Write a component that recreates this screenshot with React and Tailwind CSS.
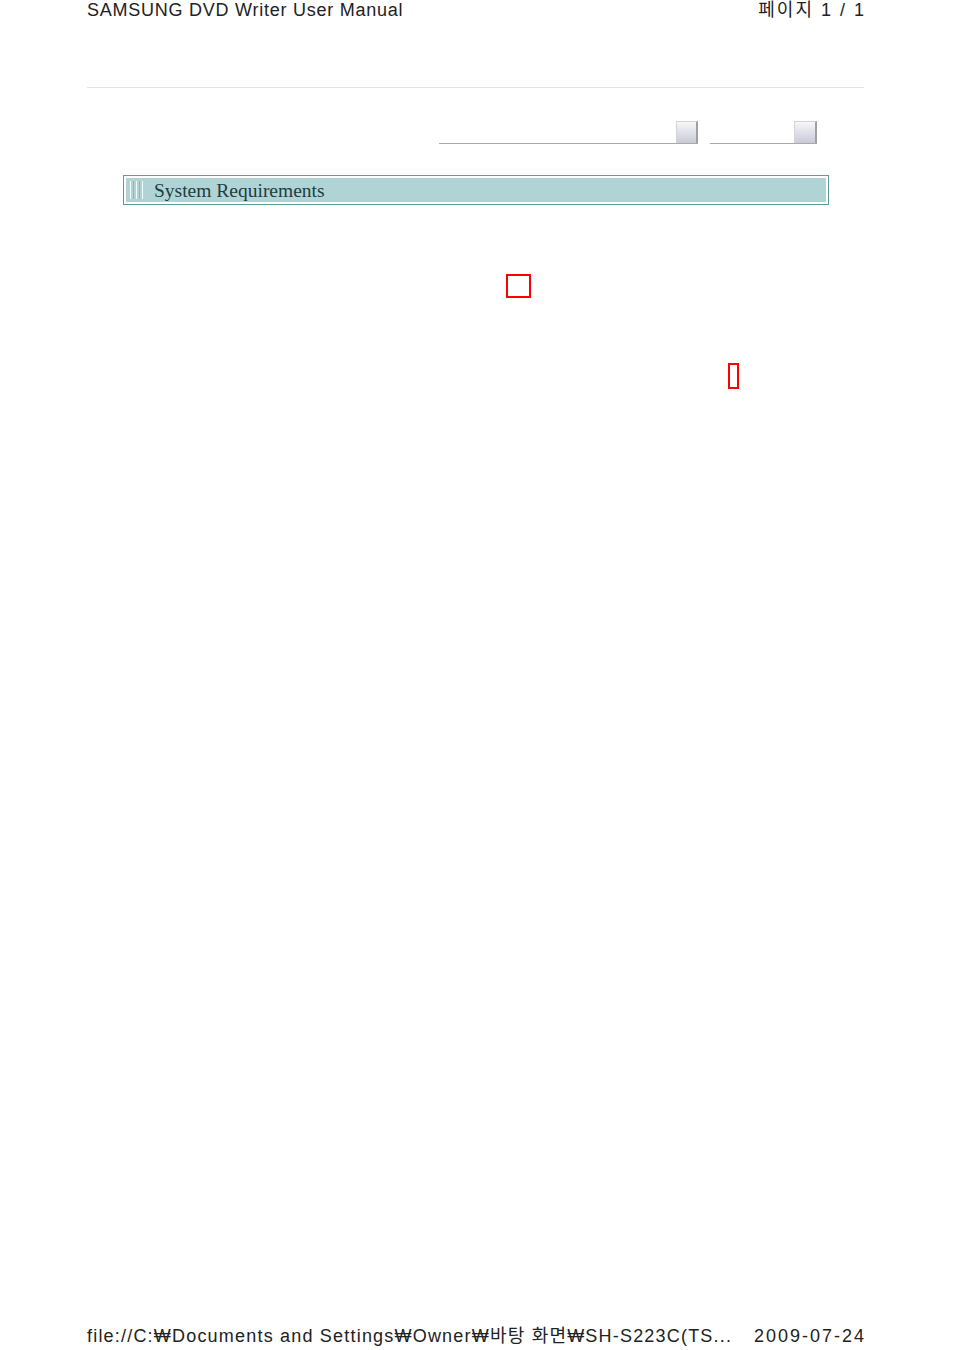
export default function App() {
  const font = { fontFamily: '"Liberation Sans", "Noto Sans CJK KR", sans-serif' };
  return (
    <div className="w-[954px] h-[1350px] bg-white flex flex-col text-black" style={font}>
      <div className="ml-[87px] w-[779px] flex justify-between text-[18px] leading-[20px] text-[#222]">
        <span className="tracking-[0.75px]">SAMSUNG DVD Writer User Manual</span>
        <span className="tracking-[2px]">페이지 1 / 1</span>
      </div>
      <div className="ml-[87px] w-[777px] mt-[67px] h-px bg-[#e3e3e3]" />

      <div className="flex mt-[33px]">
        <div className="ml-[439px] w-[259px] flex items-end border-b border-[#a9a9a9]">
          <div className="flex-1" />
          <div className="w-[22px] h-[22px] border-t border-l border-[#d4d4d8] border-r-2 border-r-[#a0a0a0] bg-gradient-to-b from-[#f7f7fa] to-[#c8cad6]" />
        </div>
        <div className="ml-[12px] w-[107px] flex items-end border-b border-[#a9a9a9]">
          <div className="flex-1" />
          <div className="w-[23px] h-[22px] border-t border-l border-[#d4d4d8] border-r-2 border-r-[#a0a0a0] bg-gradient-to-b from-[#f7f7fa] to-[#c8cad6]" />
        </div>
      </div>

      <div className="ml-[123px] mt-[31px] w-[706px] h-[30px] border border-[#5f9a9c] p-[2px] bg-white">
        <div className="h-full bg-[#b0d4d6] flex items-center">
          <div className="ml-[4px] flex gap-[2px] h-[18px]">
            <div className="w-px bg-[#f4fafa]" />
            <div className="w-px bg-[#8fb7b8]" />
            <div className="w-px bg-[#f4fafa]" />
            <div className="w-px bg-[#8fb7b8]" />
            <div className="w-px bg-[#f4fafa]" />
          </div>
          <span className="ml-[11px] text-[19.5px] font-medium text-[#1d3d3e] mt-[1px]" style={{ fontFamily: '"Liberation Serif", "DejaVu Serif", serif' }}>
            System Requirements
          </span>
        </div>
      </div>

      <div className="ml-[506px] mt-[69px] w-[25px] h-[24px] border-2 border-[#ff0000]" />
      <div className="ml-[728px] mt-[65px] w-[11px] h-[26px] border-2 border-[#ff0000]" />

      <div className="flex-1" />
      <div className="ml-[87px] w-[779px] flex justify-between text-[18px] leading-[20px] text-[#222] mb-[4px]">
        <span className="tracking-[1.2px]">file://C:₩Documents and Settings₩Owner₩바탕 화면₩SH-S223C(TS...</span>
        <span className="tracking-[2px]">2009-07-24</span>
      </div>
    </div>
  );
}
